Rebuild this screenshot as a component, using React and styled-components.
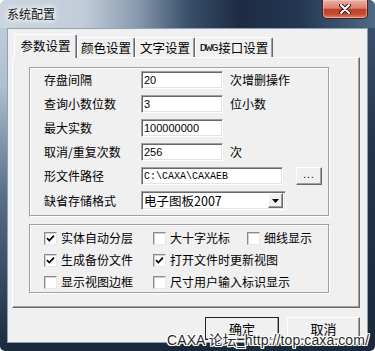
import React from "react";
import styled, { createGlobalStyle } from "styled-components";

const CJK = `"Noto Sans CJK SC", "Liberation Sans", sans-serif`;

const GlobalStyle = createGlobalStyle`
  html, body { margin: 0; padding: 0; background: #fff; }
  * { box-sizing: border-box; }
  body { font-family: ${CJK}; color: #000; }
`;

const Window = styled.div`
  position: relative;
  width: 375px;
  height: 351px;
  display: flex;
  flex-direction: column;
  border-radius: 6px 6px 5px 5px;
  overflow: hidden;
  background:
    linear-gradient(180deg, #c6d1dc 0%, #aebfce 25%, #587089 55%, #1b2a3e 100%) left top / 7px 100% no-repeat,
    linear-gradient(180deg, #3b5572 0%, #24364d 40%, #1a283b 100%);
`;

const TitleBar = styled.div`
  height: 28px;
  flex: none;
  display: flex;
  justify-content: space-between;
  align-items: flex-start;
  padding: 0 7px;
  background: linear-gradient(90deg, #cbd5e0 0%, #c2cdd9 22%, #8b9db2 36%, #3a506b 50%, #1c2c43 64%, #233752 80%, #4f6985 100%);
`;

const Title = styled.div`
  margin-top: 6px;
  font-size: 12px;
  line-height: 16px;
  color: #111;
  text-shadow: 0 0 4px #fff, 0 0 6px #fff, 0 0 8px rgba(255, 255, 255, 0.8);
`;

const CloseButton = styled.div`
  width: 46px;
  height: 19px;
  display: flex;
  align-items: center;
  justify-content: center;
  border: 1px solid #4a2020;
  border-top: none;
  border-radius: 0 0 5px 5px;
  background: linear-gradient(180deg, #eab0a4 0%, #d98070 45%, #c0412c 52%, #c54a33 78%, #e3836a 100%);
  box-shadow: inset 0 0 0 1px rgba(255, 210, 200, 0.5);
`;

const Client = styled.div`
  flex: 1;
  margin: 0 7px 8px;
  background: #f0f0f0;
  border: 1px solid #8ea2b6;
  padding: 5px 7px 2px 4px;
  display: flex;
  flex-direction: column;
`;

const TabStrip = styled.div`
  position: relative;
  z-index: 1;
  height: 24px;
  margin-bottom: -1px;
  padding-left: 2px;
  display: flex;
  align-items: flex-end;
`;

const Tab = styled.div`
  width: ${(p) => p.$w}px;
  height: ${(p) => (p.$active ? 24 : 20)}px;
  margin-bottom: ${(p) => (p.$active ? 0 : 1)}px;
  background: #f0f0f0;
  border-top: 1px solid #fff;
  border-left: 1px solid #fff;
  border-right: 1px solid #696969;
  border-radius: 2px 2px 0 0;
  box-shadow: inset -1px 0 0 #a0a0a0;
  display: flex;
  align-items: center;
  justify-content: center;
  padding-bottom: ${(p) => (p.$active ? 2 : 0)}px;
  font-size: 12.5px;
  line-height: 16px;
  white-space: nowrap;
`;

const Mono = styled.span`
  font-family: "Liberation Mono", monospace;
  font-size: 11.5px;
  letter-spacing: -1px;
  margin-right: 1px;
`;

const Panel = styled.div`
  flex: none;
  height: 251px;
  border: 1px solid #fff;
  border-right-color: #696969;
  border-bottom-color: #696969;
  box-shadow: inset -1px -1px 0 #a0a0a0;
  padding: 9px 0 0 16px;
  display: flex;
  flex-direction: column;
  gap: 7px;
`;

const GroupBox = styled.div`
  width: 301px;
  height: ${(p) => p.$h}px;
  border: 1px solid #a0a0a0;
  border-right-color: #fff;
  border-bottom-color: #fff;
  box-shadow: inset -1px -1px 0 #a0a0a0, inset 1px 1px 0 #fff;
  padding: ${(p) => p.$pt}px 0 0 14px;
`;

const Rows = styled.div`
  display: flex;
  flex-direction: column;
  gap: 6px;
`;

const Row = styled.div`
  height: ${(p) => p.$h || 18}px;
  display: flex;
  align-items: center;
`;

const Label = styled.div`
  width: 97px;
  font-size: 12px;
  line-height: 16px;
`;

const Suffix = styled.div`
  margin-left: 7px;
  font-size: 12px;
  line-height: 16px;
`;

const sunken = `
  border: 1px solid #a0a0a0;
  border-right-color: #fff;
  border-bottom-color: #fff;
  box-shadow: inset 1px 1px 0 #696969, inset -1px -1px 0 #e3e3e3;
  background: #fff;
`;

const Field = styled.input`
  ${sunken}
  width: ${(p) => p.$w || 82}px;
  height: 18px;
  padding: 0 0 0 2px;
  margin: 0;
  outline: none;
  color: #000;
  font-family: ${(p) => (p.$mono ? `"Liberation Mono", monospace` : `"Liberation Sans", sans-serif`)};
  font-size: ${(p) => (p.$mono ? 10 : 11)}px;
`;

const raised = `
  background: #f0f0f0;
  border: 1px solid #fff;
  border-right-color: #696969;
  border-bottom-color: #696969;
  box-shadow: inset -1px -1px 0 #a0a0a0;
`;

const BrowseButton = styled.div`
  ${raised}
  width: 26px;
  height: 18px;
  margin-left: 13px;
  display: flex;
  align-items: center;
  justify-content: center;
  font-family: "Liberation Sans", sans-serif;
  font-size: 10px;
  letter-spacing: 1px;
  padding-bottom: 3px;
`;

const Combo = styled.div`
  ${sunken}
  width: 145px;
  height: 19px;
  display: flex;
  align-items: center;
  justify-content: space-between;
  padding: 0 2px 0 2px;
  font-size: 12.5px;
  line-height: 16px;
`;

const ComboArrow = styled.div`
  ${raised}
  width: 15px;
  height: 15px;
  display: flex;
  align-items: center;
  justify-content: center;
`;

const CheckGrid = styled.div`
  display: grid;
  grid-template-columns: 109px 94px auto;
  grid-auto-rows: 16px;
  row-gap: 6px;
`;

const CheckItem = styled.div`
  grid-column: ${(p) => p.$span || "auto"};
  display: flex;
  align-items: center;
  gap: 4px;
  font-size: 12px;
  line-height: 16px;
  white-space: nowrap;
`;

const Box = styled.div`
  width: 13px;
  height: 13px;
  flex: none;
  border: 1px solid #8a8a8a;
  border-right-color: #e8e8e8;
  border-bottom-color: #e8e8e8;
  box-shadow: inset 1px 1px 0 #d0d0d0;
  background: #fff;
  display: flex;
  align-items: center;
  justify-content: center;
`;

const ButtonRow = styled.div`
  margin-top: 9px;
  display: flex;
  justify-content: flex-end;
  gap: 8px;
`;

const Button = styled.div`
  ${raised}
  width: ${(p) => p.$w}px;
  height: 23px;
  display: flex;
  align-items: center;
  justify-content: center;
  font-size: 13px;
  line-height: 16px;
  ${(p) => (p.$default ? "outline: 1px solid #222; outline-offset: -1px;" : "")}
`;

const Watermark = styled.div`
  position: absolute;
  left: 167px;
  top: 331px;
  font-family: "Liberation Sans", ${CJK};
  font-size: 14px;
  line-height: 18px;
  letter-spacing: 0.1px;
  color: #2a2a2a;
  white-space: nowrap;
  text-shadow:
    1px 0 0 #fff, -1px 0 0 #fff, 0 1px 0 #fff, 0 -1px 0 #fff,
    1px 1px 0 #fff, -1px -1px 0 #fff, 1px -1px 0 #fff, -1px 1px 0 #fff;
`;

const CheckMark = () => (
  <svg width="9" height="9" viewBox="0 0 9 9">
    <path d="M1 4.2 L3.3 6.6 L8 1.6" fill="none" stroke="#000" strokeWidth="1.7" />
  </svg>
);

const Check = ({ checked, span, children }) => (
  <CheckItem $span={span}>
    <Box>{checked && <CheckMark />}</Box>
    {children}
  </CheckItem>
);

const tabs = [
  { w: 63, label: "参数设置", active: true },
  { w: 58, label: "颜色设置" },
  { w: 60, label: "文字设置" },
  { w: 78, label: <><Mono>DWG</Mono>接口设置</> },
];

export default function App() {
  return (
    <>
      <GlobalStyle />
      <Window>
        <TitleBar>
          <Title>系统配置</Title>
          <CloseButton>
            <svg width="12" height="10" viewBox="0 0 12 10">
              <path d="M2 1 L10 9 M10 1 L2 9" stroke="#3a1010" strokeWidth="4" strokeLinecap="round" />
              <path d="M2 1 L10 9 M10 1 L2 9" stroke="#fff" strokeWidth="2" strokeLinecap="round" />
            </svg>
          </CloseButton>
        </TitleBar>
        <Client>
          <TabStrip>
            {tabs.map((t, i) => (
              <Tab key={i} $w={t.w} $active={t.active}>
                {t.label}
              </Tab>
            ))}
          </TabStrip>
          <Panel>
            <GroupBox $h={150} $pt={3}>
              <Rows>
                <Row>
                  <Label>存盘间隔</Label>
                  <Field defaultValue="20" readOnly />
                  <Suffix>次增删操作</Suffix>
                </Row>
                <Row>
                  <Label>查询小数位数</Label>
                  <Field defaultValue="3" readOnly />
                  <Suffix>位小数</Suffix>
                </Row>
                <Row>
                  <Label>最大实数</Label>
                  <Field defaultValue="100000000" readOnly />
                </Row>
                <Row>
                  <Label>取消/重复次数</Label>
                  <Field defaultValue="256" readOnly />
                  <Suffix>次</Suffix>
                </Row>
                <Row>
                  <Label>形文件路径</Label>
                  <Field $w={142} $mono defaultValue="C:\CAXA\CAXAEB" readOnly />
                  <BrowseButton>...</BrowseButton>
                </Row>
                <Row $h={19}>
                  <Label>缺省存储格式</Label>
                  <Combo>
                    <span>电子图板2007</span>
                    <ComboArrow>
                      <svg width="7" height="4" viewBox="0 0 7 4">
                        <path d="M0 0 H7 L3.5 4 Z" fill="#000" />
                      </svg>
                    </ComboArrow>
                  </Combo>
                </Row>
              </Rows>
            </GroupBox>
            <GroupBox $h={70} $pt={5}>
              <CheckGrid>
                <Check checked>实体自动分层</Check>
                <Check>大十字光标</Check>
                <Check>细线显示</Check>
                <Check checked>生成备份文件</Check>
                <Check checked span="2 / 4">打开文件时更新视图</Check>
                <Check>显示视图边框</Check>
                <Check span="2 / 4">尺寸用户输入标识显示</Check>
              </CheckGrid>
            </GroupBox>
          </Panel>
          <ButtonRow>
            <Button $w={74} $default>确定</Button>
            <Button $w={73}>取消</Button>
          </ButtonRow>
        </Client>
        <Watermark>CAXA 论坛_http://top.caxa.com/</Watermark>
      </Window>
    </>
  );
}
